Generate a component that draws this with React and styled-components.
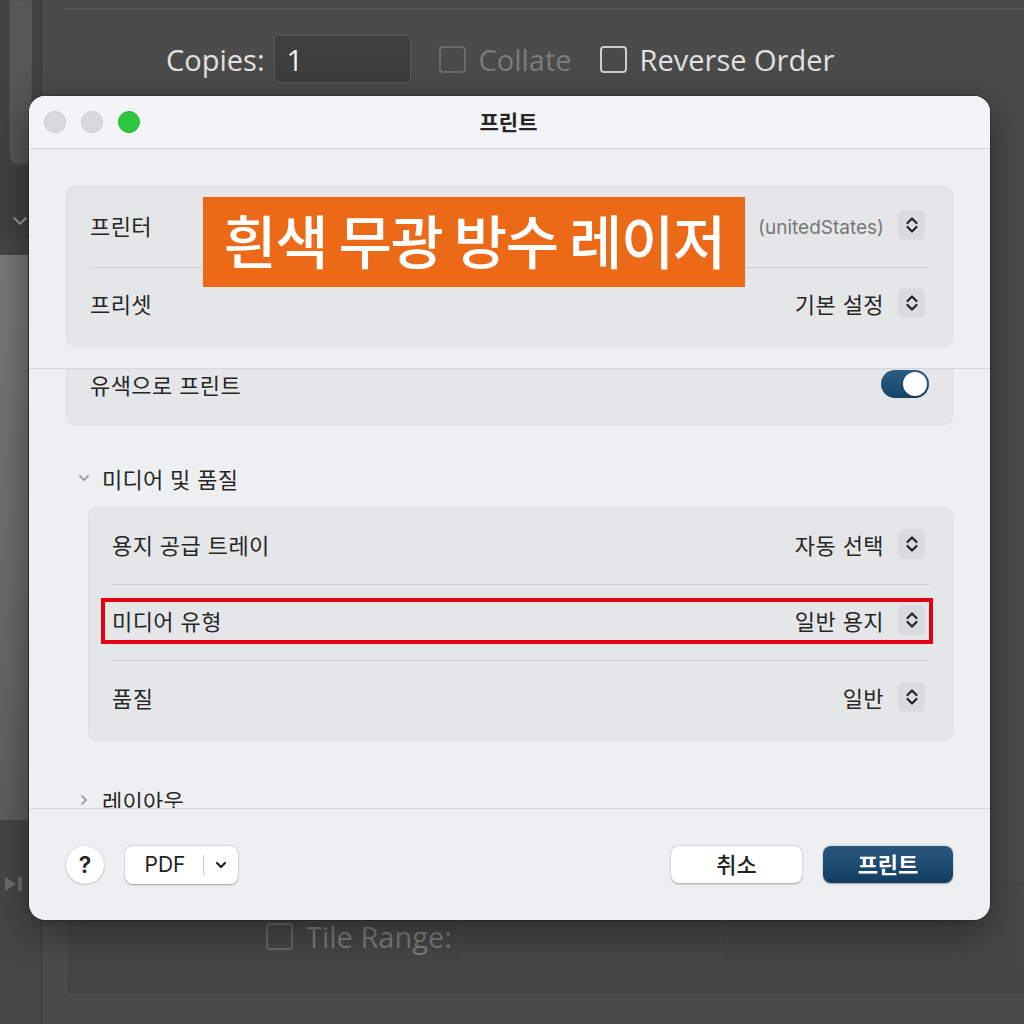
import React from "react";
import styled, { createGlobalStyle } from "styled-components";

const Global = createGlobalStyle`
  html, body { margin: 0; padding: 0; background: #4b4b4b; }
  * { box-sizing: border-box; }
`;

const KR = `"Inter", "Noto Sans CJK KR", sans-serif`;
const OS = `"Open Sans", "Noto Sans", sans-serif`;

const Screen = styled.div`
  position: relative;
  width: 1024px;
  height: 1024px;
  overflow: hidden;
  background: #4b4b4b;
`;

const Backdrop = styled.div`
  display: grid;
  grid-template-columns: 42px 1fr;
  height: 100%;
`;

const SideBar = styled.div`
  display: flex;
  flex-direction: column;
  background: #464646;
  border-right: 1px solid #3a3a3a;
`;

const ThumbArea = styled.div`
  height: 237px;
  display: flex;
  flex-direction: column;
  align-items: flex-start;
  padding-left: 9px;
  border-bottom: 1px solid #3c3c3c;
  background: #424242;
`;

const Thumb = styled.div`
  width: 23px;
  height: 165px;
  border-radius: 0 0 10px 10px;
  background: #575757;
  border: 1px solid #505050;
`;

const SideChevron = styled.div`
  margin-top: 46px;
  margin-left: 1px;
  color: #9a9a9a;
  display: flex;
`;

const SideGradient = styled.div`
  margin-top: 18px;
  width: 28px;
  height: 565px;
  background: linear-gradient(180deg, #7a7a7a 0%, #6c6c6c 60%, #5e5e5e 100%);
`;

const SideIcon = styled.div`
  margin-top: 55px;
  padding-left: 4px;
  display: flex;
  color: #6c6c6c;
`;

const Main = styled.div`
  display: flex;
  flex-direction: column;
  min-width: 0;
`;

const TopLine = styled.div`
  margin-top: 8px;
  margin-left: 22px;
  height: 1px;
  background: #5a5a5a;
`;

const CopiesRow = styled.div`
  display: flex;
  align-items: center;
  margin-top: 26px;
  padding-left: 124px;
  height: 48px;
  font-family: ${OS};
  font-size: 29px;
`;

const BgLabel = styled.span`
  color: ${(p) => (p.$dim ? "#7c7c7c" : "#e2e2e2")};
  white-space: nowrap;
`;

const BgInput = styled.div`
  width: ${(p) => p.$w}px;
  height: ${(p) => p.$h}px;
  margin-left: ${(p) => p.$ml}px;
  background: ${(p) => (p.$dark ? "#3f3f3f" : "#474747")};
  border: 1px solid ${(p) => (p.$dark ? "#585858" : "#4e4e4e")};
  border-radius: 3px;
  color: #f2f2f2;
  padding-left: 12px;
  display: flex;
  align-items: center;
`;

const BgCheck = styled.div`
  width: 27px;
  height: 27px;
  border: 2px solid ${(p) => (p.$dim ? "#6a6a6a" : "#cfcfcf")};
  border-radius: 4px;
  margin-left: ${(p) => p.$ml}px;
  margin-right: 13px;
  flex: none;
`;

const Spacer = styled.div`
  flex: 1;
`;

const BottomPanel = styled.div`
  margin-left: 26px;
  margin-bottom: 31px;
  height: 110px;
  border: 1px solid #414141;
  border-right: none;
  background: linear-gradient(180deg, #4a4a4a, #444444);
  display: flex;
  align-items: flex-start;
  padding-top: 38px;
  font-family: ${OS};
  font-size: 29px;
`;

const TileRow = styled.div`
  display: flex;
  align-items: center;
  padding-left: 197px;
  height: 28px;
`;

/* ---------- dialog ---------- */

const Dialog = styled.div`
  position: absolute;
  left: 29px;
  top: 96px;
  width: 961px;
  height: 824px;
  border-radius: 16px;
  background: #eeeff1;
  box-shadow: 0 10px 40px rgba(0, 0, 0, 0.45), 0 0 0 1px rgba(0, 0, 0, 0.2);
  display: flex;
  flex-direction: column;
  overflow: hidden;
  font-family: ${KR};
  color: #262626;
`;

const TitleBar = styled.div`
  position: relative;
  height: 53px;
  flex: none;
  background: #f3f4f6;
  border-bottom: 1px solid #d6d7da;
  display: flex;
  align-items: center;
  justify-content: center;
  padding-bottom: 3px;
`;

const Lights = styled.div`
  position: absolute;
  left: 15px;
  top: 15px;
  display: flex;
  gap: 15px;
`;

const Light = styled.div`
  width: 22px;
  height: 22px;
  border-radius: 50%;
  background: ${(p) => (p.$green ? "#2bc840" : "#d9d9db")};
  border: 1px solid ${(p) => (p.$green ? "#22b036" : "#c9c9cc")};
`;

const Title = styled.div`
  font-size: 21px;
  font-weight: 700;
  color: #262626;
  margin-left: -2px;
`;

const Header = styled.div`
  position: relative;
  flex: none;
  padding: 37px 37px 21px 37px;
  border-bottom: 1px solid #d6d7da;
`;

const Group = styled.div`
  background: #e5e6e8;
  border: 1px solid #dedfe2;
  border-radius: 9px;
  padding: 0 23px;
  margin-left: ${(p) => p.$indent || 0}px;
  height: ${(p) => p.$h}px;
  display: flex;
  flex-direction: column;
`;

const Row = styled.div`
  position: relative;
  height: ${(p) => p.$h}px;
  flex: none;
  display: flex;
  align-items: center;
  justify-content: space-between;
  padding-bottom: 5px;
  font-size: 22px;
  letter-spacing: 0.4px;
  border-top: ${(p) => (p.$divider ? "1px solid #cfd0d3" : "none")};
`;

const Value = styled.div`
  display: flex;
  align-items: center;
  gap: 14px;
  color: ${(p) => (p.$muted ? "#777" : "#262626")};
  font-size: ${(p) => (p.$muted ? "19px" : "22px")};
  letter-spacing: ${(p) => (p.$muted ? "0" : "0.4px")};
`;

const ValueText = styled.span`
  margin-top: ${(p) => (p.$muted ? 5 : 0)}px;
`;

const Stepper = styled.div`
  width: 27px;
  height: 30px;
  border-radius: 6px;
  background: #dadbde;
  display: flex;
  align-items: center;
  justify-content: center;
  margin-right: 4px;
`;

const Toggle = styled.div`
  width: 48px;
  height: 28px;
  border-radius: 14px;
  background: linear-gradient(180deg, #2b5d86, #174468);
  display: flex;
  align-items: center;
  justify-content: flex-end;
  padding-right: 2px;
`;

const Knob = styled.div`
  width: 24px;
  height: 24px;
  border-radius: 50%;
  background: #fff;
  box-shadow: 0 1px 2px rgba(0, 0, 0, 0.3);
`;

const ScrollArea = styled.div`
  flex: 1;
  overflow: hidden;
  padding: 0 37px;
  border-bottom: 1px solid #d6d7da;
`;

const ScrollInner = styled.div`
  margin-top: -21px;
  display: flex;
  flex-direction: column;
`;

const SectionHead = styled.div`
  display: flex;
  align-items: center;
  gap: 11px;
  height: 30px;
  margin-top: ${(p) => p.$mt}px;
  margin-bottom: ${(p) => p.$mb || 0}px;
  padding-left: 11px;
  padding-bottom: 4px;
  font-size: 22px;
  letter-spacing: 0.3px;
  color: #262626;
`;

const Chevron = styled.span`
  display: flex;
  color: #a0a0a4;
`;

const Highlight = styled.div`
  position: absolute;
  left: -11px;
  right: -4px;
  top: 13px;
  bottom: 16px;
  border: 4px solid #e60012;
  pointer-events: none;
`;

const Banner = styled.div`
  position: absolute;
  left: 174px;
  top: 48px;
  width: 542px;
  height: 90px;
  background: #ec6a17;
  color: #fff;
  font-family: "Noto Sans CJK KR", sans-serif;
  font-weight: 500;
  font-size: 58px;
  letter-spacing: -1.5px;
  display: flex;
  align-items: center;
  justify-content: center;
  padding-bottom: 6px;
`;

const Footer = styled.div`
  height: 111px;
  flex: none;
  display: flex;
  align-items: center;
  padding: 0 37px;
  gap: 21px;
`;

const HelpBtn = styled.div`
  width: 38px;
  height: 38px;
  border-radius: 50%;
  background: #fff;
  box-shadow: 0 0.5px 2px rgba(0, 0, 0, 0.35);
  display: flex;
  align-items: center;
  justify-content: center;
  font-family: "Inter", sans-serif;
  font-size: 23px;
  font-weight: 600;
  color: #222;
`;

const PdfBtn = styled.div`
  width: 113px;
  height: 38px;
  border-radius: 8px;
  background: #fff;
  box-shadow: 0 0.5px 2px rgba(0, 0, 0, 0.35);
  display: flex;
  align-items: center;
  font-family: "Inter", sans-serif;
  font-size: 21px;
  color: #222;
`;

const PdfLabel = styled.span`
  width: 78px;
  text-align: center;
  padding-left: 2px;
`;

const PdfSep = styled.span`
  width: 1px;
  height: 20px;
  background: #c8c8c8;
`;

const PdfArrow = styled.span`
  flex: 1;
  display: flex;
  justify-content: center;
  color: #222;
`;

const DialogBtn = styled.div`
  width: ${(p) => p.$w}px;
  height: 37px;
  border-radius: 8px;
  background: ${(p) => (p.$primary ? "linear-gradient(180deg, #29587f, #133d61)" : "#fff")};
  color: ${(p) => (p.$primary ? "#fff" : "#222")};
  font-weight: ${(p) => (p.$primary ? 700 : 500)};
  box-shadow: 0 0.5px 2px rgba(0, 0, 0, 0.35);
  display: flex;
  align-items: center;
  justify-content: center;
  padding-bottom: 3px;
  font-size: 22px;
`;

const UpDown = () => (
  <svg width="14" height="20" viewBox="0 0 14 20" fill="none">
    <path d="M2.5 8 L7 3.5 L11.5 8" stroke="#222" strokeWidth="2.2" strokeLinecap="round" strokeLinejoin="round" />
    <path d="M2.5 12 L7 16.5 L11.5 12" stroke="#222" strokeWidth="2.2" strokeLinecap="round" strokeLinejoin="round" />
  </svg>
);

const ChevDown = ({ size = 14, color = "currentColor", w = 1.8 }) => (
  <svg width={size} height={size} viewBox="0 0 14 14" fill="none">
    <path d="M3 5 L7 9 L11 5" stroke={color} strokeWidth={w} strokeLinecap="round" strokeLinejoin="round" />
  </svg>
);

const ChevRight = () => (
  <svg width="14" height="14" viewBox="0 0 14 14" fill="none">
    <path d="M5 3 L9 7 L5 11" stroke="currentColor" strokeWidth="1.8" strokeLinecap="round" strokeLinejoin="round" />
  </svg>
);

const Select = ({ children, muted }) => (
  <Value $muted={muted}>
    <ValueText $muted={muted}>{children}</ValueText>
    <Stepper>
      <UpDown />
    </Stepper>
  </Value>
);

export default function App() {
  return (
    <Screen>
      <Global />
      <Backdrop>
        <SideBar>
          <ThumbArea>
            <Thumb />
            <SideChevron>
              <ChevDown size={20} color="#9a9a9a" w={1.5} />
            </SideChevron>
          </ThumbArea>
          <SideGradient />
          <SideIcon>
            <svg width="20" height="18" viewBox="0 0 20 18">
              <path d="M1 2 L12 9 L1 16 Z" fill="#6e6e6e" />
              <rect x="14" y="2" width="4" height="14" fill="#6e6e6e" />
            </svg>
          </SideIcon>
        </SideBar>
        <Main>
          <TopLine />
          <CopiesRow>
            <BgLabel>Copies:</BgLabel>
            <BgInput $w={137} $h={48} $ml={9} $dark>1</BgInput>
            <BgCheck $dim $ml={28} />
            <BgLabel $dim>Collate</BgLabel>
            <BgCheck $ml={28} />
            <BgLabel>Reverse Order</BgLabel>
          </CopiesRow>
          <Spacer />
          <BottomPanel>
            <TileRow>
              <BgCheck $dim $ml={0} />
              <BgLabel $dim>Tile Range:</BgLabel>
              <BgInput $w={260} $h={46} $ml={10} />
            </TileRow>
          </BottomPanel>
        </Main>
      </Backdrop>

      <Dialog>
        <TitleBar>
          <Lights>
            <Light />
            <Light />
            <Light $green />
          </Lights>
          <Title>프린트</Title>
        </TitleBar>

        <Header>
          <Group $h={161}>
            <Row $h={80}>
              <span>프린터</span>
              <Select muted>(unitedStates)</Select>
            </Row>
            <Row $h={76} $divider>
              <span>프리셋</span>
              <Select>기본 설정</Select>
            </Row>
          </Group>
          <Banner>흰색 무광 방수 레이저</Banner>
        </Header>

        <ScrollArea>
          <ScrollInner>
            <Group $h={77}>
              <Row $h={75}>
                <span>유색으로 프린트</span>
                <Toggle>
                  <Knob />
                </Toggle>
              </Row>
            </Group>
            <SectionHead $mt={40} $mb={12}>
              <Chevron>
                <ChevDown />
              </Chevron>
              미디어 및 품질
            </SectionHead>
            <Group $indent={22} $h={234}>
              <Row $h={76}>
                <span>용지 공급 트레이</span>
                <Select>자동 선택</Select>
              </Row>
              <Row $h={76} $divider>
                <span>미디어 유형</span>
                <Select>일반 용지</Select>
                <Highlight />
              </Row>
              <Row $h={78} $divider>
                <span>품질</span>
                <Select>일반</Select>
              </Row>
            </Group>
            <SectionHead $mt={46}>
              <Chevron>
                <ChevRight />
              </Chevron>
              레이아웃
            </SectionHead>
          </ScrollInner>
        </ScrollArea>

        <Footer>
          <HelpBtn>?</HelpBtn>
          <PdfBtn>
            <PdfLabel>PDF</PdfLabel>
            <PdfSep />
            <PdfArrow>
              <ChevDown size={14} w={2.2} />
            </PdfArrow>
          </PdfBtn>
          <Spacer />
          <DialogBtn $w={131}>취소</DialogBtn>
          <DialogBtn $w={130} $primary>
            프린트
          </DialogBtn>
        </Footer>
      </Dialog>
    </Screen>
  );
}
